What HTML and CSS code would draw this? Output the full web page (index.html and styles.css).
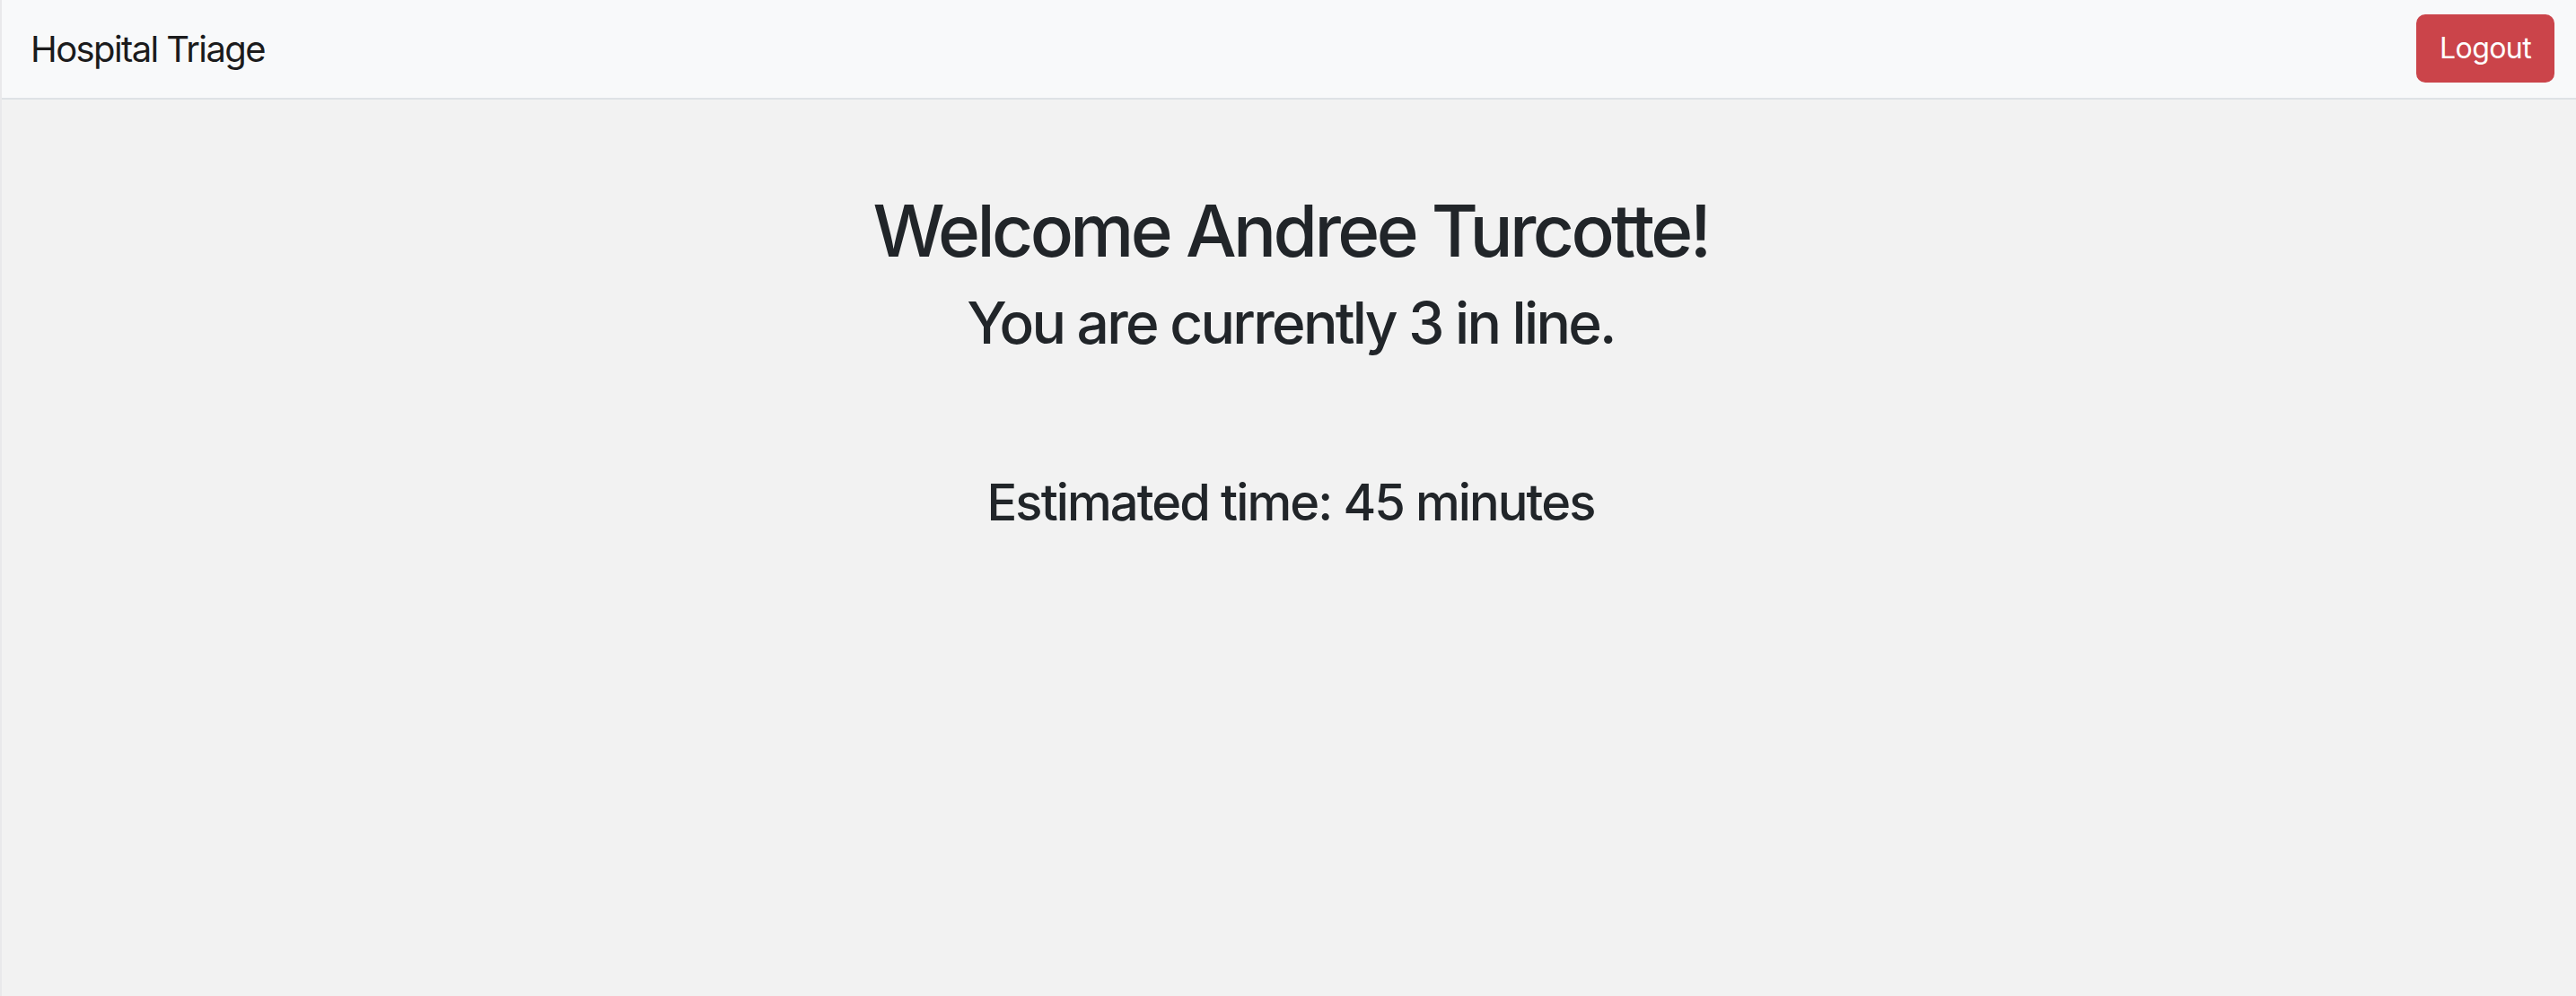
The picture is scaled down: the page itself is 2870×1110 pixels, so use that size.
FILE: index.html
```html
<!DOCTYPE html>
<html lang="en">
<head>
<meta charset="utf-8">
<title>Hospital Triage</title>
<link rel="stylesheet" href="styles.css">
</head>
<body>
<div class="app">
  <nav class="navbar">
    <span class="brand">Hospital Triage</span>
    <button class="btn-logout" type="button">Logout</button>
  </nav>
  <main class="content">
    <h1 class="welcome">Welcome Andree Turcotte!</h1>
    <h2 class="position">You are currently 3 in line.</h2>
    <h3 class="estimate">Estimated time: 45 minutes</h3>
  </main>
</div>
</body>
</html>
```

FILE: styles.css
```css
* { box-sizing: border-box; }
html, body {
  margin: 0;
  padding: 0;
}
body {
  font-family: Inter, "Noto Sans", "Liberation Sans", sans-serif;
  color: #212529;
  background: #f2f2f2;
  overflow: hidden;
}
.app {
  height: 1110px;
  border-left: 2px solid #e9e9eb;
  background: #f2f2f2;
}
.navbar {
  display: flex;
  align-items: center;
  justify-content: space-between;
  height: 111px;
  padding: 0 24px 0 32px;
  background: #f8f9fa;
  border-bottom: 2px solid #dee2e6;
}
.brand {
  font-size: 40px;
  line-height: 60px;
  color: #1b1b1c;
  letter-spacing: -1.6px;
}
.btn-logout {
  font-family: inherit;
  font-size: 32px;
  line-height: 48px;
  color: #fff;
  background: #cb444a;
  border: 2px solid #cb444a;
  border-radius: 10px;
  padding: 12px 24px;
  height: 76px;
  margin-top: -2px;
  letter-spacing: -0.6px;
  cursor: pointer;
}
.content {
  display: flex;
  flex-direction: column;
  align-items: center;
  padding-top: 98px;
  padding-left: 4px;
}
.welcome {
  margin: 0 0 16px;
  font-size: 80px;
  line-height: 96px;
  font-weight: 500;
  letter-spacing: -3.6px;
}
.position {
  margin: 0;
  font-size: 64px;
  line-height: 77px;
  font-weight: 500;
  letter-spacing: -2.7px;
}
.estimate {
  margin: 129px 0 0;
  font-size: 56px;
  line-height: 67px;
  font-weight: 500;
  letter-spacing: -1.9px;
}
```
